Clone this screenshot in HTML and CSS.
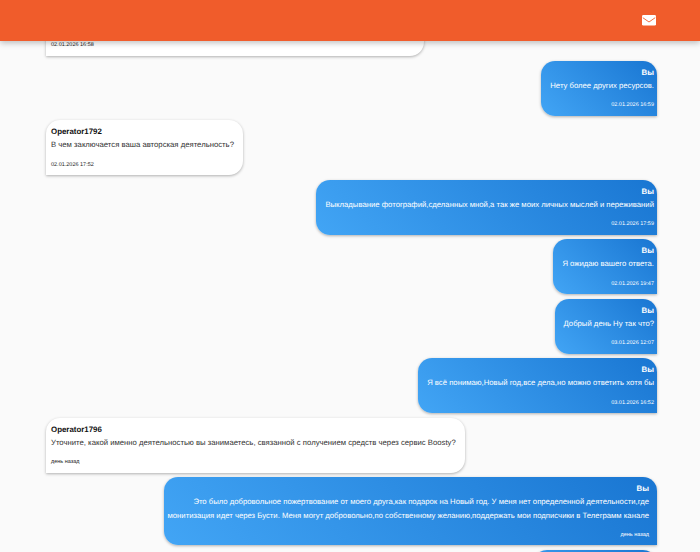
FILE: index.html
```html
<!DOCTYPE html>
<html lang="en">
<head>
  <meta charset="UTF-8" />
  <title>Чат</title>
  <link rel="stylesheet" href="styles.css">
</head>
<body>
  <header class="topbar">
    <svg class="mail-icon" viewBox="0 0 14 11" aria-hidden="true">
      <rect width="14" height="10.600" rx="1.400" fill="white" />
      <path d="M0.800 2.700L7 7L13.200 2.700" fill="none" stroke="#f05c2b" stroke-width="0.900" />
    </svg>
  </header>
  <main class="messages">
    <div class="msg theirs first">
      <div class="time">02.01.2026 16:58</div>
    </div>
    <div class="msg mine">
      <div class="name">Вы</div>
      <div class="text">Нету более других ресурсов.</div>
      <div class="time">02.01.2026 16:59</div>
    </div>
    <div class="msg theirs">
      <div class="name">Operator1792</div>
      <div class="text">В чем заключается ваша авторская деятельность?</div>
      <div class="time">02.01.2026 17:52</div>
    </div>
    <div class="msg mine">
      <div class="name">Вы</div>
      <div class="text">Выкладывание фотографий,сделанных мной,а так же моих личных мыслей и переживаний</div>
      <div class="time">02.01.2026 17:59</div>
    </div>
    <div class="msg mine">
      <div class="name">Вы</div>
      <div class="text">Я ожидаю вашего ответа.</div>
      <div class="time">02.01.2026 19:47</div>
    </div>
    <div class="msg mine">
      <div class="name">Вы</div>
      <div class="text">Добрый день Ну так что?</div>
      <div class="time">03.01.2026 12:07</div>
    </div>
    <div class="msg mine">
      <div class="name">Вы</div>
      <div class="text">Я всё понимаю,Новый год,все дела,но можно ответить хотя бы</div>
      <div class="time">03.01.2026 16:52</div>
    </div>
    <div class="msg theirs">
      <div class="name">Operator1796</div>
      <div class="text">Уточните, какой именно деятельностью вы занимаетесь, связанной с получением средств через сервис Boosty?</div>
      <div class="time">день назад</div>
    </div>
    <div class="msg mine wide">
      <div class="name">Вы</div>
      <div class="text">Это было добровольное пожертвование от моего друга,как подарок на Новый год. У меня нет определенной деятельности,где монитизация идет через Бусти. Меня могут добровольно,по собственному желанию,поддержать мои подписчики в Телеграмм канале</div>
      <div class="time">день назад</div>
    </div>
    <div class="msg mine last"></div>
  </main>
</body>
</html>
```
FILE: styles.css
```css
html, body {
  height: 100%;
}

body {
  margin: 0;
  background: #fafafa;
  font-family: "Liberation Sans", Arial, sans-serif;
  text-rendering: geometricPrecision;
  overflow: hidden;
}

.topbar {
  position: fixed;
  top: 0;
  left: 0;
  right: 0;
  height: 40.500px;
  background: #f05c2b;
  box-shadow: 0 2px 6px rgba(0, 0, 0, 0.25);
  display: flex;
  align-items: center;
  justify-content: flex-end;
  padding-right: 44px;
  z-index: 5;
}

.mail-icon {
  width: 14px;
  height: 11px;
}

.messages {
  display: flex;
  flex-direction: column;
  gap: 4.500px;
  padding: 0 43px 0 46px;
}

.msg {
  box-sizing: border-box;
  height: 55px;
  padding-top: 7px;
  border-radius: 14px;
  box-shadow: 0 1px 3px rgba(0, 0, 0, 0.3);
}

.theirs {
  align-self: flex-start;
  padding-left: 5px;
  padding-right: 9px;
  background: white;
  border-bottom-left-radius: 0;
  color: #333;
}

.mine {
  align-self: flex-end;
  padding-left: 9px;
  padding-right: 3px;
  background: linear-gradient(45deg, #42a5f5, #1976d2);
  border-bottom-right-radius: 0;
  color: white;
  text-align: right;
}

.first {
  width: 378px;
  height: 26px;
  padding-top: 10.500px;
  margin-top: 30px;
  border-radius: 0 0 14px 0;
}

.wide {
  width: 493px;
  height: 68px;
  padding-left: 1px;
  padding-right: 8px;
}

.last {
  width: 124px;
}

.name {
  font-size: 7.900px;
  font-weight: bold;
  line-height: 10px;
  color: #111;
}

.mine .name {
  color: white;
}

.text {
  font-size: 7.720px;
  line-height: 13.500px;
  margin-top: 1px;
}

.time {
  font-size: 5.500px;
  line-height: 8px;
  margin-top: 9px;
  color: #222;
}

.mine .time {
  color: white;
}

.first .time {
  margin-top: 0;
}
```
